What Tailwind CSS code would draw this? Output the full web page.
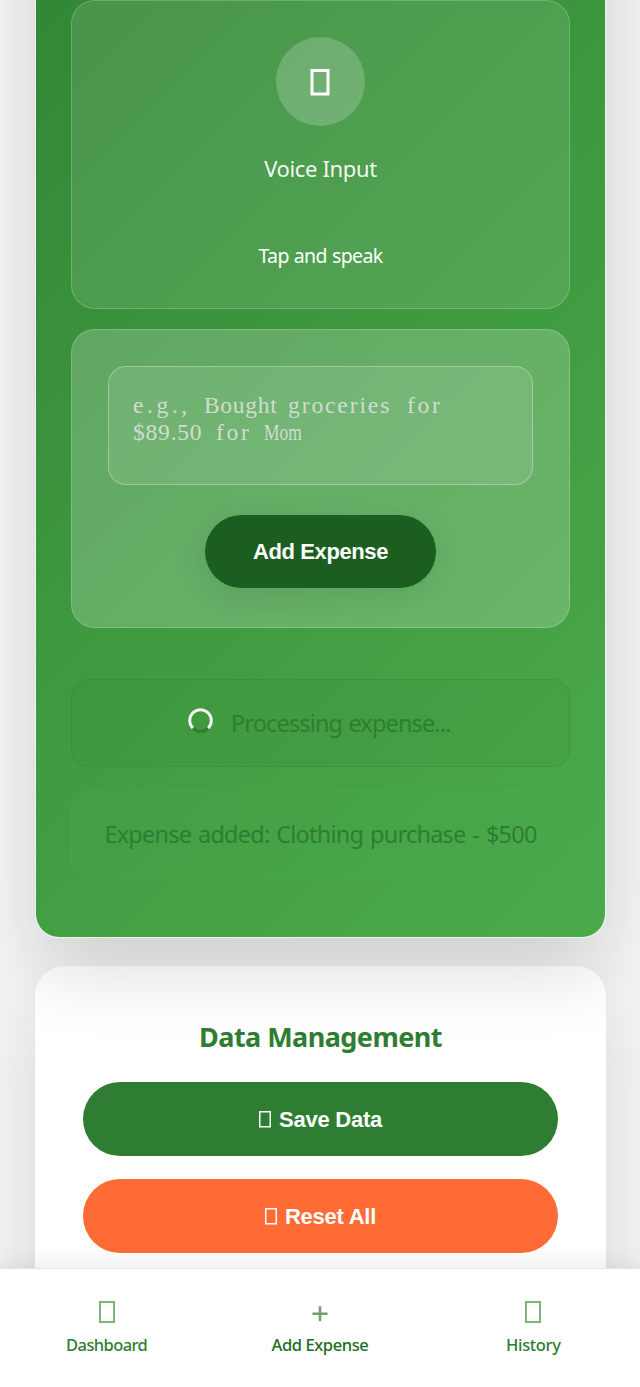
<!DOCTYPE html>
<html lang="en">
<head>
<meta charset="utf-8">
<title>Add Expense</title>
<script src="https://cdn.jsdelivr.net/npm/@tailwindcss/browser@4"></script>
</head>
<body class="bg-[#f5f5f5] font-['Noto_Sans','Open_Sans',sans-serif]">
<div class="flex flex-col w-[640px] h-[1387px] overflow-hidden">
  <main class="flex-1 min-h-0 overflow-hidden px-[35px]">
    <section class="relative z-10 -mt-[160px] h-[1098px] w-[571px] pt-[159px] px-[35px] border border-white/90 rounded-[24px] bg-linear-135 from-[#308334] via-[#3e993f] to-[#4bab4b] bg-origin-border shadow-[0_30px_76px_rgba(0,20,10,0.16)]">
      <div class="h-[309px] rounded-[24px] border border-white/20 bg-white/10 pt-[36px] flex flex-col items-center text-white">
        <div class="size-[89px] rounded-full bg-white/20 flex items-center justify-center">
          <svg class="w-[20px] h-[28px] mr-[2px]" viewBox="0 0 20 28" fill="none" stroke="white" stroke-width="3"><rect x="2" y="2.5" width="16" height="23.5"/></svg>
        </div>
        <div class="mt-[26px] h-[32px] leading-[32px] text-[22px] tracking-[-0.35px] text-white/95 whitespace-nowrap">Voice Input</div>
        <div class="mt-[57px] h-[30px] leading-[30px] text-[19.5px] tracking-[-0.6px] [word-spacing:0.5px] whitespace-nowrap">Tap and speak</div>
      </div>
      <div class="mt-[20px] h-[299px] rounded-[24px] border border-white/20 bg-white/20 px-[36px] pt-[36px] flex flex-col items-center">
        <div class="w-[425px] h-[119px] rounded-[18px] border border-white/30 bg-white/10 pl-[24px] pt-[25px] font-['Liberation_Serif',serif] text-[23.5px] leading-[27px] text-[#e4e4e4]/85 whitespace-nowrap">
          <div class="flex"><span class="w-[71px] tracking-[3.6px]">e.g.,</span><span class="w-[84px] tracking-[0.7px]">Bought</span><span class="w-[119px] tracking-[1.9px]">groceries</span><span class="tracking-[2.7px]">for</span></div>
          <div class="flex"><span class="w-[83px] tracking-[0.8px]">$89.50</span><span class="w-[48px] tracking-[2.7px]">for</span><span class="inline-block origin-left scale-x-[0.74]">Mom</span></div>
        </div>
        <button class="mt-[30px] w-[231px] h-[73px] rounded-full bg-[#1b5e20] text-white font-['Liberation_Sans',sans-serif] font-bold text-[22px] tracking-[-0.38px] shadow-[0_8px_30px_rgba(0,60,0,0.12)]">Add Expense</button>
      </div>
      <div class="mt-[51px] h-[88px] rounded-[18px] border border-[#2e7d32]/30 bg-[#2e7d32]/10 flex items-center pl-[116px] pt-px text-[23.5px] text-[#2e7d32]">
        <svg class="w-[25px] h-[25px] mb-[7px]" viewBox="0 0 25 25" fill="none" stroke-width="3"><circle cx="12.5" cy="12.5" r="10.8" stroke="#2e7d32"/><path d="M4.86 20.14A10.8 10.8 0 1 1 20.14 20.14" stroke="#f1f5f1"/></svg>
        <span class="ml-[18px] tracking-[-0.86px] [word-spacing:1px] whitespace-nowrap">Processing expense...</span>
      </div>
      <div class="mt-[24px] h-[88px] rounded-[18px] border border-[#4caf50]/30 bg-[#4caf50]/10 flex items-center justify-center text-[23.5px] text-[#2e7d32]">
        <span class="tracking-[-0.78px] [word-spacing:1.5px] whitespace-nowrap">Expense added: Clothing purchase - $500</span>
      </div>
    </section>
    <section class="mt-[28px] h-[420px] w-[571px] rounded-[30px] border border-white/60 bg-white pt-[50px] px-[47px] shadow-[0_30px_76px_rgba(0,20,10,0.13)]">
      <h2 class="h-[40px] leading-[40px] text-center font-bold text-[27px] tracking-[-0.55px] text-[#2e7d32] whitespace-nowrap">Data Management</h2>
      <button class="mt-[25px] w-[475px] h-[74px] rounded-full bg-[#2e7d32] text-white font-['Liberation_Sans',sans-serif] font-bold text-[22px] tracking-[-0.25px] flex items-center justify-center">
        <svg class="w-[12px] h-[17px] mr-[8px]" viewBox="0 0 12 17" fill="none" stroke="white" stroke-width="1.5"><rect x=".75" y=".75" width="10.5" height="15"/></svg>Save Data</button>
      <button class="mt-[23px] w-[475px] h-[74px] rounded-full bg-[#ff6b35] text-white font-['Liberation_Sans',sans-serif] font-bold text-[22px] tracking-[-0.25px] flex items-center justify-center">
        <svg class="w-[12px] h-[17px] mr-[8px]" viewBox="0 0 12 17" fill="none" stroke="white" stroke-width="1.5"><rect x=".75" y=".75" width="10.5" height="15"/></svg>Reset All</button>
    </section>
  </main>
  <nav class="relative z-20 h-[119px] bg-white border-t border-[#e3e5e4] shadow-[0_-3px_24px_rgba(0,20,10,0.09)] grid grid-cols-3 text-[16.5px] text-[#2e7d32] font-medium">
    <div class="flex flex-col items-center pt-[32px]">
      <svg class="w-[16px] h-[22px]" viewBox="0 0 16 22" fill="none" stroke="#7bb57e" stroke-width="2"><rect x="1" y="1" width="14" height="20"/></svg>
      <span class="mt-[9px] leading-[26px] tracking-[-0.6px] whitespace-nowrap">Dashboard</span>
    </div>
    <div class="flex flex-col items-center pt-[32px] text-[#1b6e20]">
      <svg class="w-[16px] h-[22px]" viewBox="0 0 16 22" fill="none" stroke="#68a86b" stroke-width="2.6"><path d="M.5 12.7H15.5M8 5.2V20.2"/></svg>
      <span class="mt-[9px] leading-[26px] tracking-[-0.4px] whitespace-nowrap">Add Expense</span>
    </div>
    <div class="flex flex-col items-center pt-[32px]">
      <svg class="w-[16px] h-[22px]" viewBox="0 0 16 22" fill="none" stroke="#7bb57e" stroke-width="2"><rect x="1" y="1" width="14" height="20"/></svg>
      <span class="mt-[9px] leading-[26px] tracking-[-0.35px] whitespace-nowrap">History</span>
    </div>
  </nav>
</div>
</body>
</html>
